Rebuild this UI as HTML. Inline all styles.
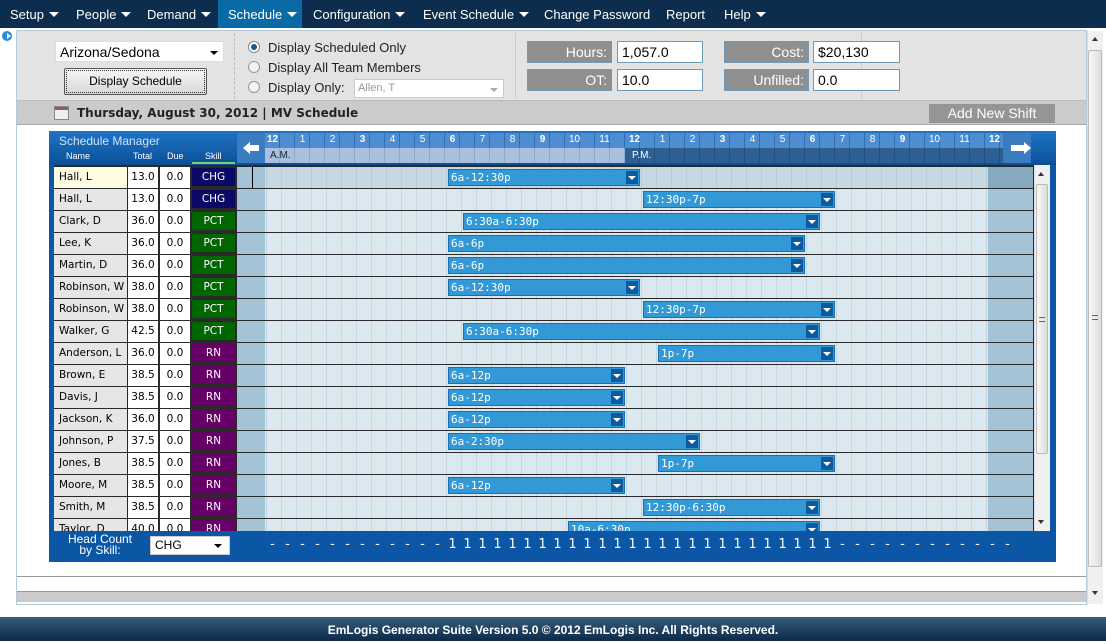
<!DOCTYPE html>
<html><head><meta charset="utf-8"><style>
*{box-sizing:border-box;margin:0;padding:0}
body{width:1106px;height:641px;overflow:hidden;background:#fff;font-family:"Liberation Sans",Verdana,sans-serif;font-size:12px;position:relative}
.abs{position:absolute}
#menu{left:0;top:0;width:1106px;height:28px;background:#0c2d4d}
#menu span{position:absolute;top:7px;color:#fff;font-size:13px;white-space:nowrap}
.tri{display:inline-block;width:0;height:0;border-left:5px solid transparent;border-right:5px solid transparent;border-top:5px solid #fff;margin-left:5px;vertical-align:2px}
.lbl{background:#8f8f8f;color:#fff;font-size:14px;text-align:right;padding-right:4px;line-height:20px;border:1px solid #6f9ab7;height:22px}
.inp{background:#fff;border:1px solid #6f9ab7;font-size:14px;line-height:20px;padding-left:4px;height:22px}
.row{position:absolute;left:54px;width:980px;height:21px;font-family:"DejaVu Sans",Verdana,sans-serif}
.nm{position:absolute;left:0;width:73px;height:21px;background:#e6e6e6;padding-left:5px;line-height:21px;font-size:10.5px;white-space:nowrap}
.tt{position:absolute;left:74px;width:30px;height:21px;background:#fff;text-align:center;line-height:21px;font-size:10.5px}
.du{position:absolute;left:106px;width:30px;height:21px;background:#fff;text-align:center;line-height:21px;font-size:10.5px}
.sk{position:absolute;left:138px;width:43px;height:18px;top:1px;color:#fff;text-align:center;line-height:18px;font-size:10.5px}
.chg{background:#0a0a66}.pct{background:#006600}.rn{background:#660066}
.gr{position:absolute;left:183px;width:796px;height:21px;background:
linear-gradient(90deg,#a5c3d7 0 28px,transparent 28px 751px,#a5c3d7 751px),
repeating-linear-gradient(90deg,#dce8f0 0 14px,#c4d6e2 14px 15px);}
.bar{position:absolute;top:2px;height:17px;background:#3399d6;border:1px solid #1a6fb5;color:#fff;font-size:11px;line-height:15px;padding-left:2px;font-family:"DejaVu Sans Mono","Liberation Mono",monospace;letter-spacing:0}
.bar i{position:absolute;right:1px;top:1px;width:12px;height:13px;background:#0d5a9e}
.bar i:after{content:"";position:absolute;left:2px;top:5px;border-left:4px solid transparent;border-right:4px solid transparent;border-top:4px solid #fff}
.hc span{position:absolute;top:0;width:15px;text-align:center;color:#fff;font-size:12px}
.hd span{position:absolute;top:0;width:15px;text-align:center;color:#fff;font-size:13px;font-family:"DejaVu Sans",sans-serif}
</style></head><body>
<div id="menu" class="abs">
<span style="left:10px">Setup<i class="tri"></i></span>
<span style="left:76px">People<i class="tri"></i></span>
<span style="left:147px">Demand<i class="tri"></i></span>
<div class="abs" style="left:218px;top:0;width:84px;height:28px;background:#0a6aa6"></div>
<span style="left:228px">Schedule<i class="tri"></i></span>
<span style="left:313px">Configuration<i class="tri"></i></span>
<span style="left:423px">Event Schedule<i class="tri"></i></span>
<span style="left:544px">Change Password</span>
<span style="left:666px">Report</span>
<span style="left:724px">Help<i class="tri"></i></span>
</div>
<div class="abs" style="left:2px;top:31px;width:10px;height:10px;border-radius:50%;background:#2a8ad8"></div>
<div class="abs" style="left:7px;top:33px;border-top:3px solid transparent;border-bottom:3px solid transparent;border-left:4px solid #fff"></div>
<div class="abs" style="left:16px;top:30px;width:1071px;height:575px;border:1px solid #b5c9d6;background:#fff"></div>
<div class="abs" style="left:17px;top:31px;width:1069px;height:70px;background:#e3e3e3;border-bottom:1px solid #bbb"></div>
<div class="abs" style="left:234px;top:33px;width:0;height:66px;border-left:1px dashed #bbb"></div>
<div class="abs" style="left:515px;top:33px;width:1px;height:66px;background:#ccc"></div>
<div class="abs" style="left:861px;top:33px;width:1px;height:66px;background:#ccc"></div>
<div class="abs" style="left:55px;top:41px;width:169px;height:21px;background:#fff;border:1px solid #ddd;font-size:14px;line-height:20px;padding-left:4px">Arizona/Sedona<span class="abs" style="right:5px;top:9px;border-left:4px solid transparent;border-right:4px solid transparent;border-top:4px solid #000"></span></div>
<div class="abs" style="left:64px;top:68px;width:143px;height:27px;border:1px solid #555;border-radius:2px;background:linear-gradient(#f6f6f6,#d8d8d8);text-align:center;line-height:25px;font-size:12px;outline:1px dotted #333;outline-offset:-3px">Display Schedule</div>
<div class="abs" style="left:248px;top:41px;width:12px;height:12px;border-radius:50%;border:1px solid #888;background:#fff"><div style="width:6px;height:6px;margin:2px;border-radius:50%;background:#1a5a8a"></div></div>
<div class="abs" style="left:248px;top:61px;width:12px;height:12px;border-radius:50%;border:1px solid #999;background:#f3f3f3"></div>
<div class="abs" style="left:248px;top:81px;width:12px;height:12px;border-radius:50%;border:1px solid #999;background:#f3f3f3"></div>
<div class="abs" style="left:268px;top:40px;font-size:13px;color:#222">Display Scheduled Only</div>
<div class="abs" style="left:268px;top:60px;font-size:13px;color:#222">Display All Team Members</div>
<div class="abs" style="left:268px;top:80px;font-size:13px;color:#222">Display Only:</div>
<div class="abs" style="left:354px;top:79px;width:150px;height:19px;background:#fff;border:1px solid #ccc;font-size:11px;color:#999;line-height:17px;padding-left:3px">Allen, T<span class="abs" style="right:5px;top:8px;border-left:4px solid transparent;border-right:4px solid transparent;border-top:4px solid #aaa"></span></div>
<div class="abs lbl" style="left:527px;top:41px;width:85px">Hours:</div>
<div class="abs inp" style="left:617px;top:41px;width:86px">1,057.0</div>
<div class="abs lbl" style="left:527px;top:69px;width:85px">OT:</div>
<div class="abs inp" style="left:617px;top:69px;width:86px">10.0</div>
<div class="abs lbl" style="left:724px;top:41px;width:85px">Cost:</div>
<div class="abs inp" style="left:813px;top:41px;width:87px">$20,130</div>
<div class="abs lbl" style="left:724px;top:69px;width:85px">Unfilled:</div>
<div class="abs inp" style="left:813px;top:69px;width:87px">0.0</div>
<div class="abs" style="left:17px;top:101px;width:1069px;height:24px;background:#cbcbcb;border-bottom:1px solid #aaa"></div>
<div class="abs" style="left:54px;top:106px;width:15px;height:14px;border:1px solid #888;background:#eee"><div style="height:3px;background:#8a5a7a"></div></div>
<div class="abs" style="left:77px;top:106px;font-size:12px;font-weight:bold;color:#222;font-family:'DejaVu Sans',Verdana,sans-serif">Thursday, August 30, 2012 | MV Schedule</div>
<div class="abs" style="left:929px;top:104px;width:126px;height:19px;background:#959595;color:#fff;font-size:14px;text-align:center;line-height:19px">Add New Shift</div>
<div class="abs" style="left:49px;top:131px;width:1007px;height:431px;background:#0b57a5"></div>
<div class="abs" style="left:49px;top:131px;width:1007px;height:34px;background:linear-gradient(#1f74c6,#0a4f96)"></div>
<div class="abs" style="left:59px;top:134px;color:#cfe3f5;font-size:12px">Schedule Manager</div>
<div class="abs" style="left:66px;top:151px;color:#fff;font-size:9px">Name</div>
<div class="abs" style="left:133px;top:151px;color:#fff;font-size:9px">Total</div>
<div class="abs" style="left:167px;top:151px;color:#fff;font-size:9px">Due</div>
<div class="abs" style="left:205px;top:151px;color:#fff;font-size:9px">Skill</div>
<div class="abs" style="left:192px;top:162px;width:43px;height:2px;background:#7ad06a"></div>
<div class="abs" style="left:237px;top:133px;width:28px;height:30px;background:#3a7cc0"></div>
<div class="abs" style="left:243px;top:142px;width:0;height:0;border-top:6px solid transparent;border-bottom:6px solid transparent;border-right:7px solid #fff"></div>
<div class="abs" style="left:250px;top:145px;width:9px;height:6px;background:#fff"></div>
<div class="abs" style="left:1003px;top:133px;width:28px;height:30px;background:#3a7cc0"></div>
<div class="abs" style="left:1024px;top:142px;width:0;height:0;border-top:6px solid transparent;border-bottom:6px solid transparent;border-left:7px solid #fff"></div>
<div class="abs" style="left:1011px;top:145px;width:13px;height:6px;background:#fff"></div>
<div class="abs" style="left:265px;top:133px;width:738px;height:15px;background:repeating-linear-gradient(90deg,#4d8dd0 0 14px,#2f6fb4 14px 15px)"></div>
<div class="abs" style="left:265px;top:148px;width:360px;height:15px;background:repeating-linear-gradient(90deg,#a8c0dd 0 14px,#8fabcf 14px 15px)"></div>
<div class="abs" style="left:625px;top:148px;width:378px;height:15px;background:repeating-linear-gradient(90deg,#2e5f93 0 14px,#244f80 14px 15px)"></div>
<div class="abs" style="left:270px;top:150px;font-size:10px;color:#123">A.M.</div>
<div class="abs" style="left:632px;top:150px;font-size:10px;color:#fff">P.M.</div>
<div class="abs hc" style="left:265px;top:134px;width:740px;font-size:10px;color:#fff">
<span style="left:0;font-weight:bold;font-size:10px">12</span><span style="left:30px;font-size:10px">1</span><span style="left:60px;font-size:10px">2</span><span style="left:90px;font-weight:bold;font-size:10px">3</span><span style="left:120px;font-size:10px">4</span><span style="left:150px;font-size:10px">5</span><span style="left:180px;font-weight:bold;font-size:10px">6</span><span style="left:210px;font-size:10px">7</span><span style="left:240px;font-size:10px">8</span><span style="left:270px;font-weight:bold;font-size:10px">9</span><span style="left:302px;font-size:10px">10</span><span style="left:332px;font-size:10px">11</span><span style="left:362px;font-weight:bold;font-size:10px">12</span><span style="left:390px;font-size:10px">1</span><span style="left:420px;font-size:10px">2</span><span style="left:450px;font-weight:bold;font-size:10px">3</span><span style="left:480px;font-size:10px">4</span><span style="left:510px;font-size:10px">5</span><span style="left:540px;font-weight:bold;font-size:10px">6</span><span style="left:570px;font-size:10px">7</span><span style="left:600px;font-size:10px">8</span><span style="left:630px;font-weight:bold;font-size:10px">9</span><span style="left:662px;font-size:10px">10</span><span style="left:692px;font-size:10px">11</span><span style="left:722px;font-weight:bold;font-size:10px">12</span>
</div>
<div class="abs" style="left:54px;top:165px;width:996px;height:366px;background:#2a2a2a;overflow:hidden">
<div style="position:relative;left:-54px;top:-165px">
<div class="row" style="top:167px"><div class="nm" style="background:#fffbe3">Hall, L</div><div class="tt">13.0</div><div class="du">0.0</div><div class="sk chg">CHG</div><div class="gr" style="background:linear-gradient(90deg,#a5c3d7 0 28px,transparent 28px 751px,#86a9c0 751px),repeating-linear-gradient(90deg,#c7d8e3 0 14px,#b8cdda 14px 15px)"><div style="position:absolute;left:15px;top:0;width:1px;height:21px;background:#000"></div><div class="bar" style="left:211px;width:192px">6a-12:30p<i></i></div></div></div>
<div class="row" style="top:189px"><div class="nm">Hall, L</div><div class="tt">13.0</div><div class="du">0.0</div><div class="sk chg">CHG</div><div class="gr"><div class="bar" style="left:406px;width:192px">12:30p-7p<i></i></div></div></div>
<div class="row" style="top:211px"><div class="nm">Clark, D</div><div class="tt">36.0</div><div class="du">0.0</div><div class="sk pct">PCT</div><div class="gr"><div class="bar" style="left:226px;width:357px">6:30a-6:30p<i></i></div></div></div>
<div class="row" style="top:233px"><div class="nm">Lee, K</div><div class="tt">36.0</div><div class="du">0.0</div><div class="sk pct">PCT</div><div class="gr"><div class="bar" style="left:211px;width:357px">6a-6p<i></i></div></div></div>
<div class="row" style="top:255px"><div class="nm">Martin, D</div><div class="tt">36.0</div><div class="du">0.0</div><div class="sk pct">PCT</div><div class="gr"><div class="bar" style="left:211px;width:357px">6a-6p<i></i></div></div></div>
<div class="row" style="top:277px"><div class="nm">Robinson, W</div><div class="tt">38.0</div><div class="du">0.0</div><div class="sk pct">PCT</div><div class="gr"><div class="bar" style="left:211px;width:192px">6a-12:30p<i></i></div></div></div>
<div class="row" style="top:299px"><div class="nm">Robinson, W</div><div class="tt">38.0</div><div class="du">0.0</div><div class="sk pct">PCT</div><div class="gr"><div class="bar" style="left:406px;width:192px">12:30p-7p<i></i></div></div></div>
<div class="row" style="top:321px"><div class="nm">Walker, G</div><div class="tt">42.5</div><div class="du">0.0</div><div class="sk pct">PCT</div><div class="gr"><div class="bar" style="left:226px;width:357px">6:30a-6:30p<i></i></div></div></div>
<div class="row" style="top:343px"><div class="nm">Anderson, L</div><div class="tt">36.0</div><div class="du">0.0</div><div class="sk rn">RN</div><div class="gr"><div class="bar" style="left:421px;width:177px">1p-7p<i></i></div></div></div>
<div class="row" style="top:365px"><div class="nm">Brown, E</div><div class="tt">38.5</div><div class="du">0.0</div><div class="sk rn">RN</div><div class="gr"><div class="bar" style="left:211px;width:177px">6a-12p<i></i></div></div></div>
<div class="row" style="top:387px"><div class="nm">Davis, J</div><div class="tt">38.5</div><div class="du">0.0</div><div class="sk rn">RN</div><div class="gr"><div class="bar" style="left:211px;width:177px">6a-12p<i></i></div></div></div>
<div class="row" style="top:409px"><div class="nm">Jackson, K</div><div class="tt">36.0</div><div class="du">0.0</div><div class="sk rn">RN</div><div class="gr"><div class="bar" style="left:211px;width:177px">6a-12p<i></i></div></div></div>
<div class="row" style="top:431px"><div class="nm">Johnson, P</div><div class="tt">37.5</div><div class="du">0.0</div><div class="sk rn">RN</div><div class="gr"><div class="bar" style="left:211px;width:252px">6a-2:30p<i></i></div></div></div>
<div class="row" style="top:453px"><div class="nm">Jones, B</div><div class="tt">38.5</div><div class="du">0.0</div><div class="sk rn">RN</div><div class="gr"><div class="bar" style="left:421px;width:177px">1p-7p<i></i></div></div></div>
<div class="row" style="top:475px"><div class="nm">Moore, M</div><div class="tt">38.5</div><div class="du">0.0</div><div class="sk rn">RN</div><div class="gr"><div class="bar" style="left:211px;width:177px">6a-12p<i></i></div></div></div>
<div class="row" style="top:497px"><div class="nm">Smith, M</div><div class="tt">38.5</div><div class="du">0.0</div><div class="sk rn">RN</div><div class="gr"><div class="bar" style="left:406px;width:177px">12:30p-6:30p<i></i></div></div></div>
<div class="row" style="top:519px"><div class="nm">Taylor, D</div><div class="tt">40.0</div><div class="du">0.0</div><div class="sk rn">RN</div><div class="gr"><div class="bar" style="left:331px;width:252px">10a-6:30p<i></i></div></div></div>
</div>
<div class="abs" style="left:980px;top:0;width:16px;height:366px;background:#f0f0f0;border-left:1px solid #ddd"></div>
<div class="abs" style="left:982px;top:19px;width:12px;height:270px;background:linear-gradient(90deg,#f8f8f8,#ddd);border:1px solid #bbb;border-radius:2px"></div>
<div class="abs" style="left:985px;top:152px;width:6px;height:5px;border-top:1px solid #666;border-bottom:1px solid #666"></div>
<div class="abs" style="left:984px;top:7px;border-left:3px solid transparent;border-right:3px solid transparent;border-bottom:4px solid #333"></div>
<div class="abs" style="left:984px;top:355px;border-left:3px solid transparent;border-right:3px solid transparent;border-top:4px solid #333"></div>
</div>
<div class="abs" style="left:60px;top:534px;width:80px;color:#fff;font-size:12px;line-height:11px;text-align:center">Head Count<br>by Skill:</div>
<div class="abs" style="left:150px;top:536px;width:80px;height:19px;background:#fff;border:1px solid #ccc;font-size:12px;line-height:17px;padding-left:4px">CHG<span class="abs" style="right:7px;top:7px;border-left:4px solid transparent;border-right:4px solid transparent;border-top:4px solid #000"></span></div>
<div class="abs hd" style="left:265px;top:537px;width:750px;height:16px">
<span style="left:0">-</span><span style="left:15px">-</span><span style="left:30px">-</span><span style="left:45px">-</span><span style="left:60px">-</span><span style="left:75px">-</span><span style="left:90px">-</span><span style="left:105px">-</span><span style="left:120px">-</span><span style="left:135px">-</span><span style="left:150px">-</span><span style="left:165px">-</span>
<span style="left:180px">1</span><span style="left:195px">1</span><span style="left:210px">1</span><span style="left:225px">1</span><span style="left:240px">1</span><span style="left:255px">1</span><span style="left:270px">1</span><span style="left:285px">1</span><span style="left:300px">1</span><span style="left:315px">1</span><span style="left:330px">1</span><span style="left:345px">1</span><span style="left:360px">1</span><span style="left:375px">1</span><span style="left:390px">1</span><span style="left:405px">1</span><span style="left:420px">1</span><span style="left:435px">1</span><span style="left:450px">1</span><span style="left:465px">1</span><span style="left:480px">1</span><span style="left:495px">1</span><span style="left:510px">1</span><span style="left:525px">1</span><span style="left:540px">1</span><span style="left:555px">1</span>
<span style="left:570px">-</span><span style="left:585px">-</span><span style="left:600px">-</span><span style="left:615px">-</span><span style="left:630px">-</span><span style="left:645px">-</span><span style="left:660px">-</span><span style="left:675px">-</span><span style="left:690px">-</span><span style="left:705px">-</span><span style="left:720px">-</span><span style="left:735px">-</span>
</div>
<div class="abs" style="left:17px;top:576px;width:1069px;height:1px;background:#999"></div>
<div class="abs" style="left:17px;top:591px;width:1069px;height:11px;background:#cbcbcb;border-top:1px solid #999"></div>
<div class="abs" style="left:1087px;top:31px;width:16px;height:573px;background:#f0f0f0;border-left:1px solid #ddd"></div>
<div class="abs" style="left:1088px;top:50px;width:14px;height:517px;background:linear-gradient(90deg,#f8f8f8,#ddd);border:1px solid #bbb;border-radius:2px"></div>
<div class="abs" style="left:1092px;top:315px;width:6px;height:5px;border-top:1px solid #666;border-bottom:1px solid #666"></div>
<div class="abs" style="left:1092px;top:37px;border-left:3px solid transparent;border-right:3px solid transparent;border-bottom:4px solid #333"></div>
<div class="abs" style="left:1092px;top:591px;border-left:3px solid transparent;border-right:3px solid transparent;border-top:4px solid #333"></div>
<div class="abs" style="left:0;top:617px;width:1106px;height:24px;background:linear-gradient(#3a5d7d,#0a2a48);color:#fff;font-size:12px;font-weight:bold;text-align:center;line-height:26px">EmLogis Generator Suite Version 5.0 © 2012 EmLogis Inc. All Rights Reserved.</div>
</body></html>
